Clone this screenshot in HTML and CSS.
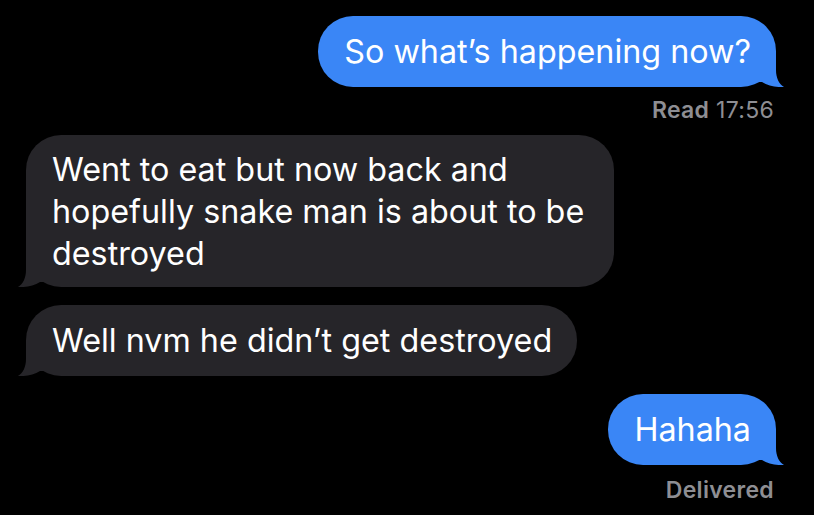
FILE: index.html
```html
<!DOCTYPE html>
<html>
<head>
<meta charset="utf-8">
<link rel="stylesheet" href="styles.css">
</head>
<body>
<div class="thread">
  <div class="row sent">
    <div class="bubble blue">So what’s happening now?<svg class="tail tail-right" width="30" height="36" viewBox="0 0 30 36"><path d="M0 0 H20 V19 C20 27 23 33 28 36 C21 36.5 12 35 6 31 L0 31 Z"/></svg></div>
    <div class="meta"><b>Read</b> 17:56</div>
  </div>
  <div class="row received first">
    <div class="bubble gray wrap">Went to eat but now back and hopefully snake man is about to be destroyed<svg class="tail tail-left" width="30" height="36" viewBox="0 0 30 36"><path d="M0 0 H20 V19 C20 27 23 33 28 36 C21 36.5 12 35 6 31 L0 31 Z"/></svg></div>
  </div>
  <div class="row received next">
    <div class="bubble gray">Well nvm he didn’t get destroyed<svg class="tail tail-left" width="30" height="36" viewBox="0 0 30 36"><path d="M0 0 H20 V19 C20 27 23 33 28 36 C21 36.5 12 35 6 31 L0 31 Z"/></svg></div>
  </div>
  <div class="row sent next">
    <div class="bubble blue">Hahaha<svg class="tail tail-right" width="30" height="36" viewBox="0 0 30 36"><path d="M0 0 H20 V19 C20 27 23 33 28 36 C21 36.5 12 35 6 31 L0 31 Z"/></svg></div>
    <div class="meta delivered"><b>Delivered</b></div>
  </div>
</div>
</body>
</html>
```
FILE: styles.css
```css
html, body {
  margin: 0;
  padding: 0;
  background: #000;
}
body {
  width: 814px;
  height: 515px;
  overflow: hidden;
  font-family: "Inter", "Liberation Sans", sans-serif;
}
.thread {
  display: flex;
  flex-direction: column;
  padding: 16px 38px 0 26px;
}
.row {
  display: flex;
  flex-direction: column;
}
.row.sent {
  align-items: flex-end;
}
.row.received {
  align-items: flex-start;
}
.row.first {
  margin-top: 11px;
}
.row.next {
  margin-top: 18px;
}
.bubble {
  position: relative;
  color: #fff;
  font-size: 32.3px;
  line-height: 42px;
  padding: 14.5px 25px 14.5px 26px;
  border-radius: 35px;
  box-sizing: border-box;
}
.bubble.blue {
  background: #3a86f6;
  fill: #3a86f6;
}
.bubble.gray {
  background: #262529;
  fill: #262529;
}
.bubble.wrap {
  max-width: 588px;
  padding: 13.5px 20px 12.5px 26px;
}
.tail {
  position: absolute;
  bottom: 0;
  display: block;
}
.tail-right {
  right: -10px;
}
.tail-left {
  left: -10px;
  transform: scaleX(-1);
}
.meta {
  margin-top: 9px;
  font-size: 23px;
  line-height: 28px;
  color: #8e8e93;
  padding-right: 2px;
  letter-spacing: 0.3px;
}
.meta.delivered {
  margin-top: 11px;
}
.meta b {
  font-weight: 600;
}
```
